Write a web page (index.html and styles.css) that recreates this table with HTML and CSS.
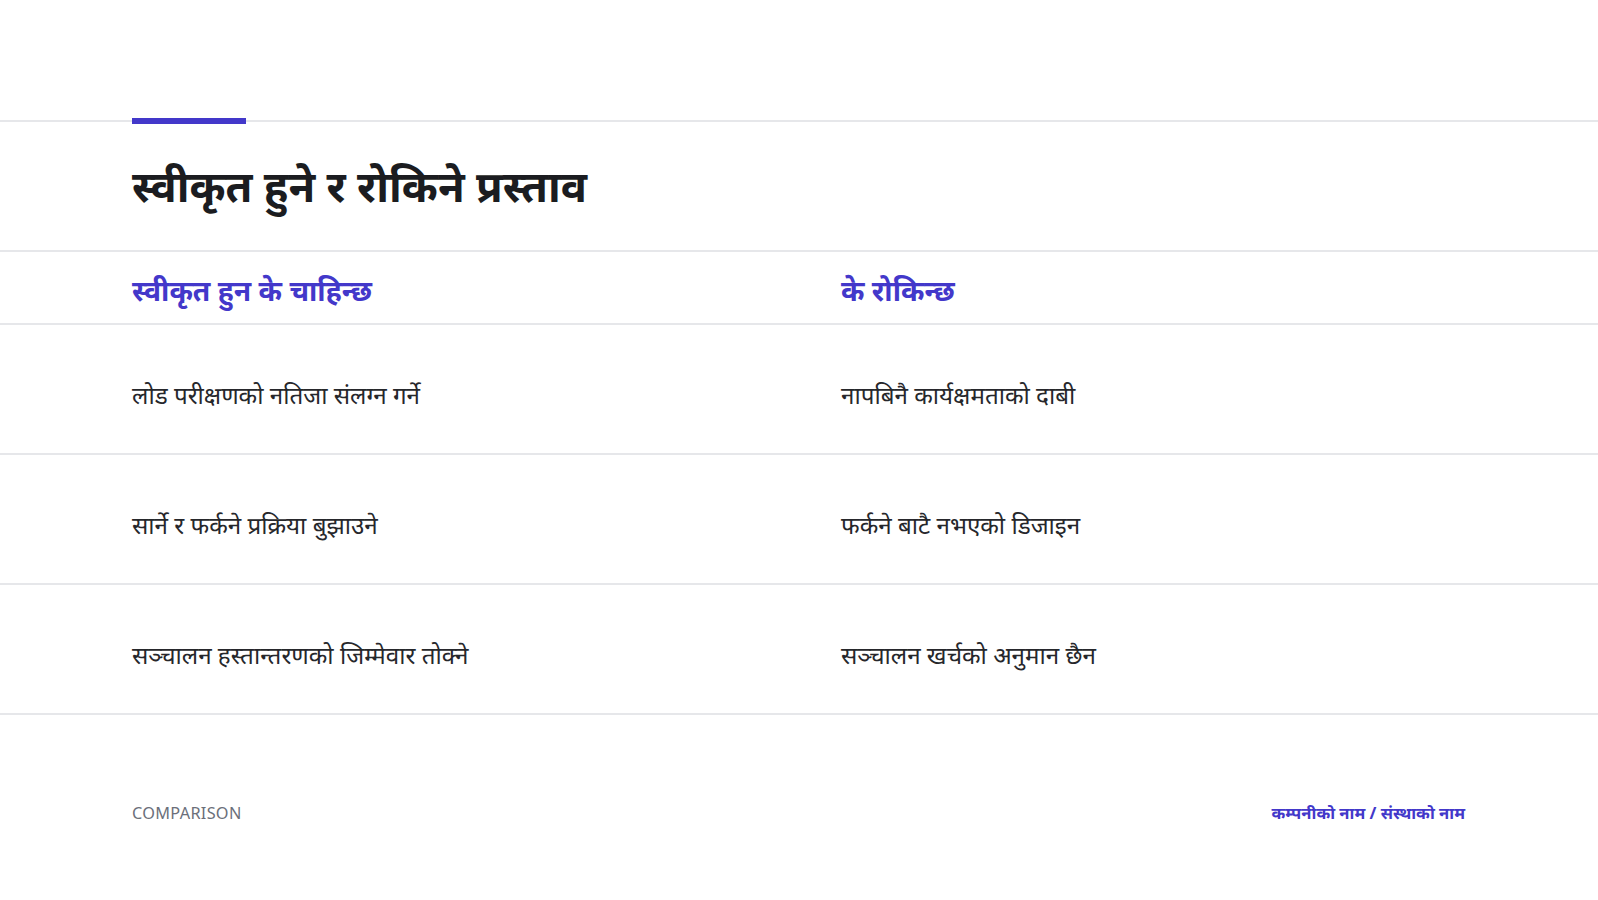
FILE: index.html
```html
<!DOCTYPE html>
<html lang="en">
<head>
<meta charset="utf-8">
<title>स्वीकृत हुने र रोकिने प्रस्ताव</title>
<link rel="stylesheet" href="styles.css">
</head>
<body>
<div class="slide">
  <header class="head">
    <div class="accent"></div>
    <h1 class="title">स्वीकृत हुने र रोकिने प्रस्ताव</h1>
  </header>
  <div class="table">
    <div class="row hrow">
      <div class="cell colhead">स्वीकृत हुन के चाहिन्छ</div>
      <div class="cell colhead">के रोकिन्छ</div>
    </div>
    <div class="row">
      <div class="cell">लोड परीक्षणको नतिजा संलग्न गर्ने</div>
      <div class="cell">नापबिनै कार्यक्षमताको दाबी</div>
    </div>
    <div class="row">
      <div class="cell">सार्ने र फर्कने प्रक्रिया बुझाउने</div>
      <div class="cell">फर्कने बाटै नभएको डिजाइन</div>
    </div>
    <div class="row">
      <div class="cell">सञ्चालन हस्तान्तरणको जिम्मेवार तोक्ने</div>
      <div class="cell">सञ्चालन खर्चको अनुमान छैन</div>
    </div>
  </div>
  <footer class="foot">
    <span class="label">COMPARISON</span>
    <span class="org">कम्पनीको नाम / संस्थाको नाम</span>
  </footer>
</div>
</body>
</html>
```
FILE: styles.css
```css
html, body {
  margin: 0;
  padding: 0;
  background: #ffffff;
}
body {
  font-family: "Noto Sans", "Noto Sans Devanagari", sans-serif;
  color: #1f2024;
}
.slide {
  width: 1598px;
  height: 900px;
  display: flex;
  flex-direction: column;
}
.head {
  margin-top: 120px;
  border-top: 2px solid #e6e7ea;
  position: relative;
  height: 128px;
  border-bottom: 2px solid #e6e7ea;
  padding: 0 133px 0 132px;
  display: flex;
  align-items: center;
}
.accent {
  position: absolute;
  left: 132px;
  top: -4px;
  width: 114px;
  height: 6px;
  background: #4338ca;
}
.title {
  margin: 0;
  font-size: 43.5px;
  font-weight: 700;
  color: #1b1c20;
  line-height: 1.2;
  padding-bottom: 2px;
}
.table {
  display: flex;
  flex-direction: column;
}
.row {
  display: grid;
  grid-template-columns: 709px 1fr;
  padding: 0 133px 0 132px;
  height: 128px;
  align-items: center;
  border-bottom: 2px solid #e6e7ea;
}
.row.hrow {
  height: 71px;
}
.cell {
  font-size: 24.2px;
  color: #26272b;
  padding-top: 10px;
}
.colhead {
  font-size: 28.3px;
  font-weight: 700;
  color: #4338ca;
  padding-top: 4px;
}
.foot {
  margin-top: auto;
  margin-bottom: 76px;
  padding: 0 133px 0 132px;
  display: flex;
  justify-content: space-between;
  align-items: center;
}
.label {
  font-size: 16.3px;
  letter-spacing: 0.3px;
  color: #6b6f7a;
}
.org {
  font-size: 16.6px;
  font-weight: 700;
  color: #4338ca;
}
```
